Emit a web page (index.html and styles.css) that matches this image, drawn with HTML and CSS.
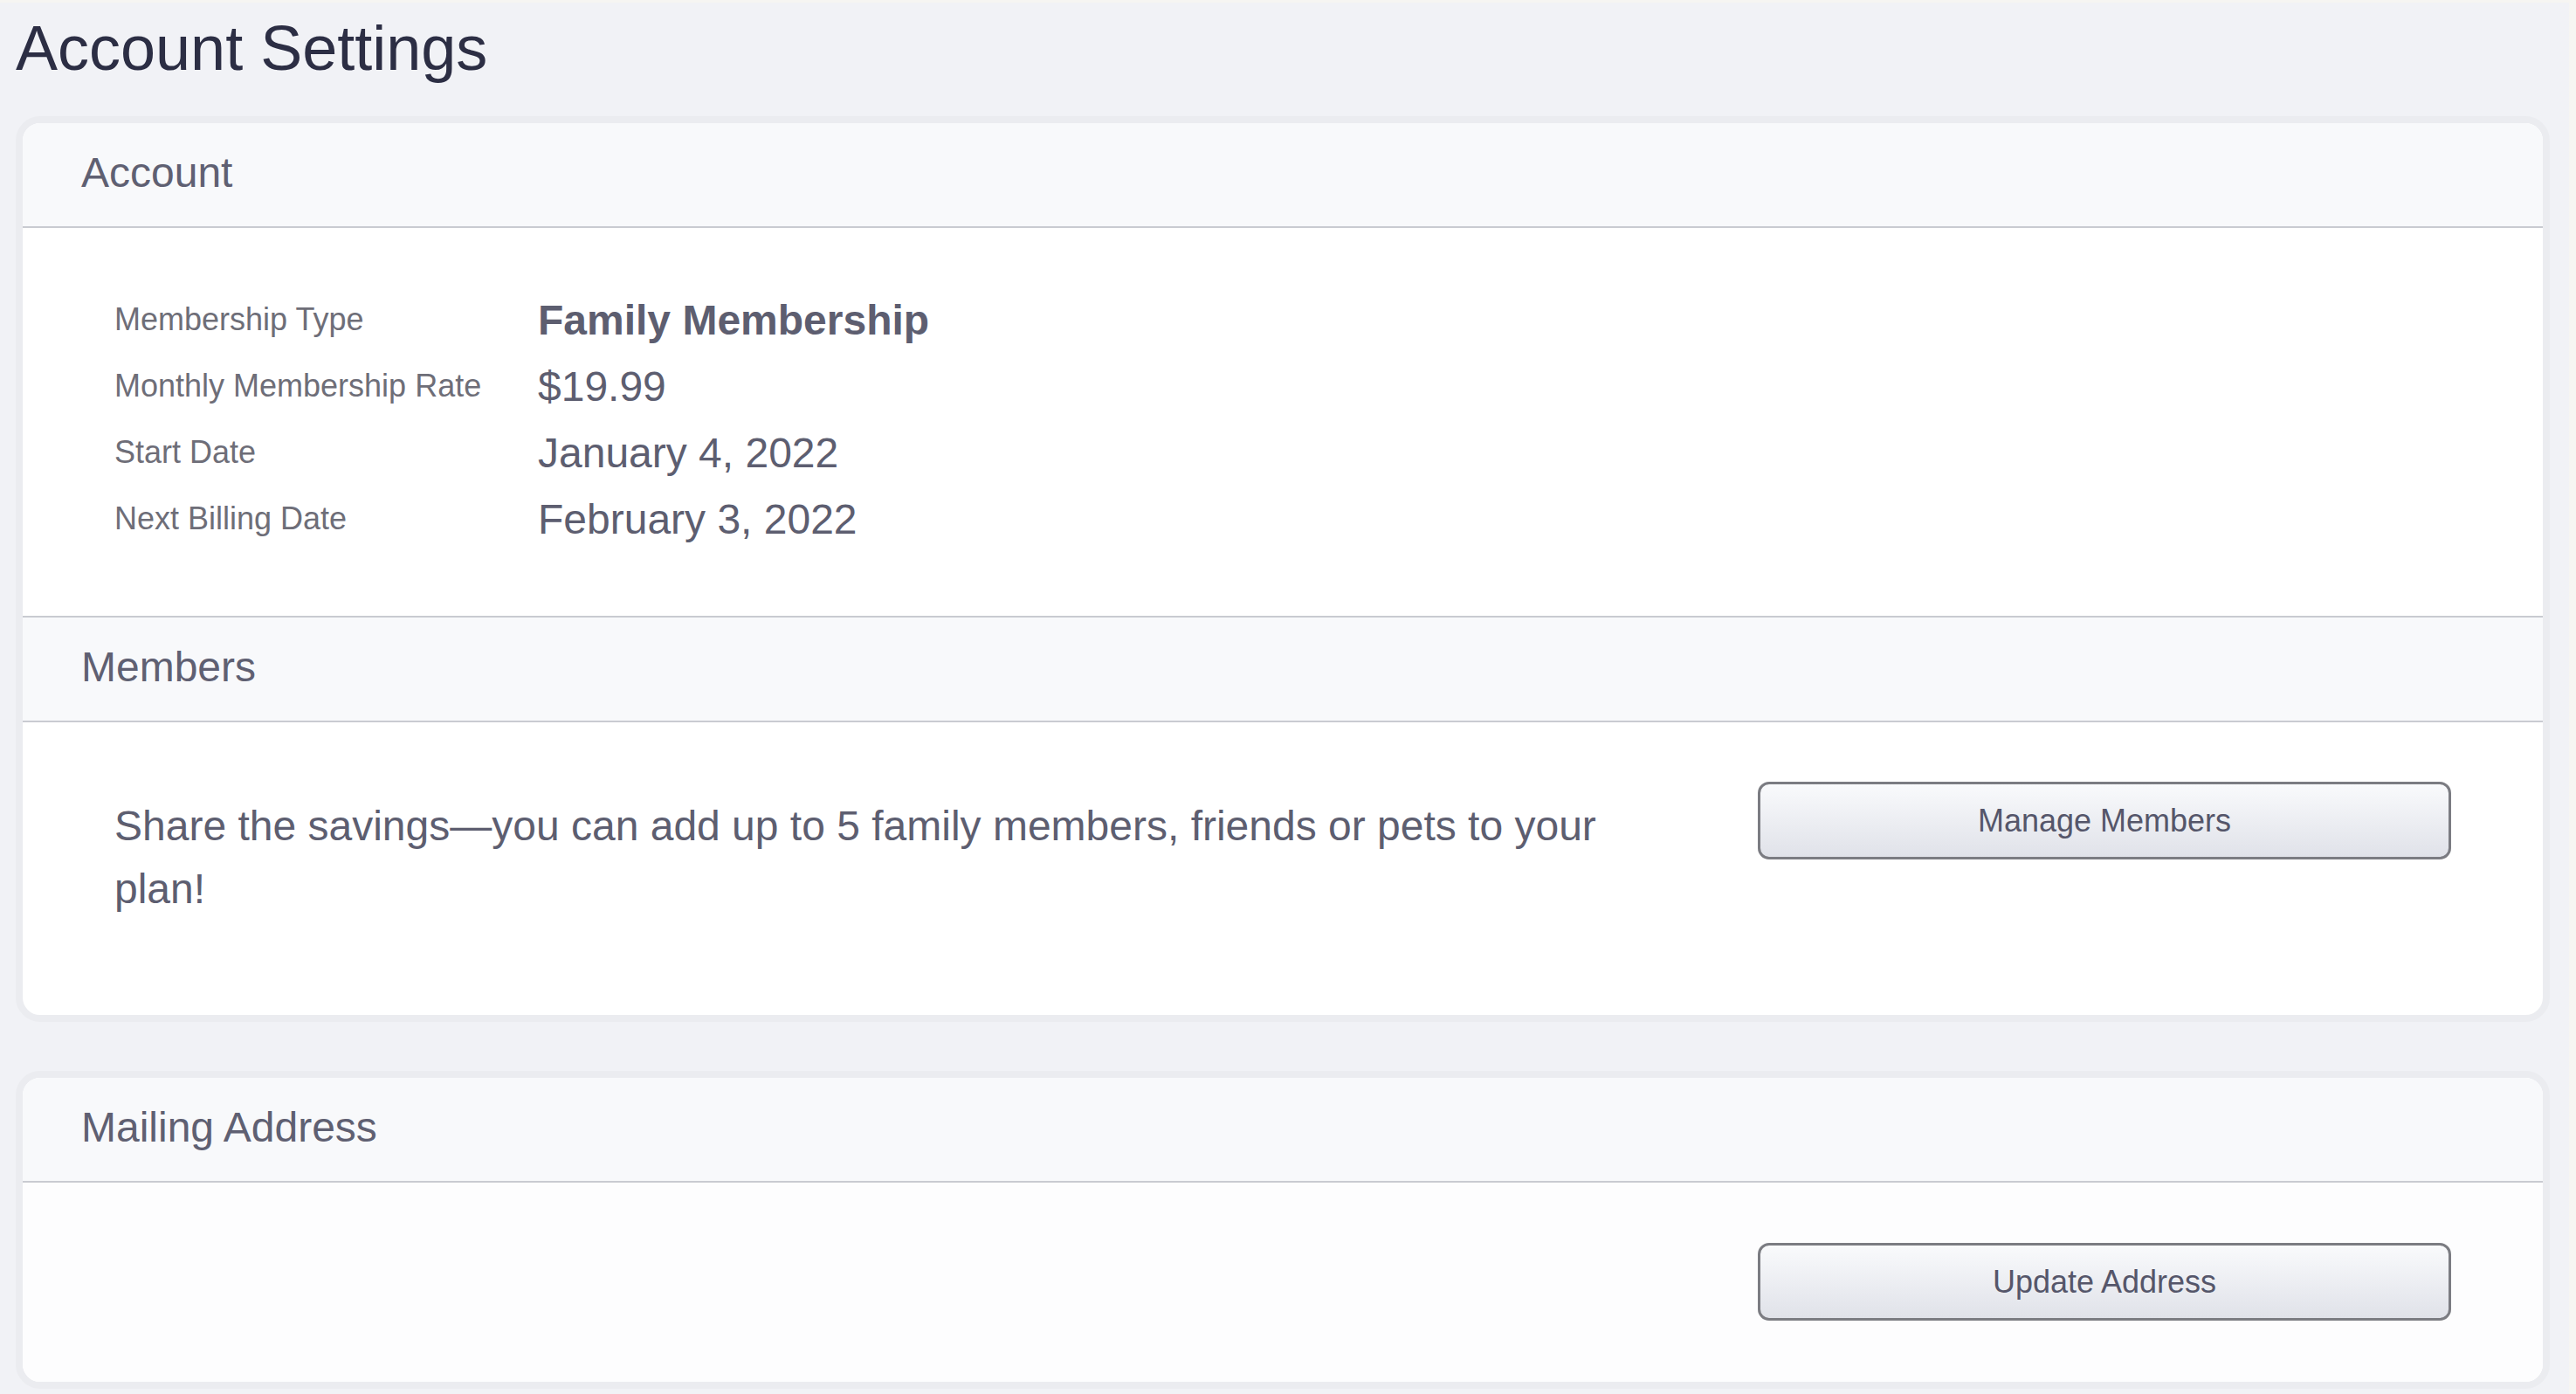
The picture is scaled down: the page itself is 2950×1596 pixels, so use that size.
FILE: index.html
```html
<!DOCTYPE html>
<html lang="en">
<head>
<meta charset="utf-8">
<title>Account Settings</title>
<link rel="stylesheet" href="styles.css">
</head>
<body>
<div class="page">
  <h1 class="page-title">Account Settings</h1>

  <section class="card">
    <div class="section">
      <h2 class="section-header">Account</h2>
      <div class="section-body details">
        <div class="detail-label">Membership Type</div>
        <div class="detail-value strong">Family Membership</div>
        <div class="detail-label">Monthly Membership Rate</div>
        <div class="detail-value">$19.99</div>
        <div class="detail-label">Start Date</div>
        <div class="detail-value">January 4, 2022</div>
        <div class="detail-label">Next Billing Date</div>
        <div class="detail-value">February 3, 2022</div>
      </div>
    </div>
    <div class="section">
      <h2 class="section-header">Members</h2>
      <div class="section-body split members-body">
        <p class="blurb">Share the savings—you can add up to 5 family members, friends or pets to your plan!</p>
        <button class="btn" type="button">Manage Members</button>
      </div>
    </div>
  </section>

  <section class="card">
    <div class="section">
      <h2 class="section-header">Mailing Address</h2>
      <div class="section-body split address-body">
        <div class="address"></div>
        <button class="btn" type="button">Update Address</button>
      </div>
    </div>
  </section>
</div>
</body>
</html>
```

FILE: styles.css
```css
html, body {
  margin: 0;
  padding: 0;
  background: #f6f5f2;
  font-family: "Liberation Sans", Arial, Helvetica, sans-serif;
}

.page {
  margin: 3px 8px 0 0;
  padding: 0 22px 3px 18px;
  background: #f1f2f6;
  min-height: 1593px;
  box-sizing: border-box;
}

.page-title {
  margin: 0;
  padding-top: 12px;
  font-size: 72px;
  font-weight: 400;
  line-height: 80px;
  color: #2c2e44;
}

.card {
  margin-top: 38px;
  border: 8px solid #ebecf0;
  border-radius: 28px;
  overflow: hidden;
  background: #ffffff;
}

.card + .card {
  margin-top: 56px;
}

.section + .section {
  border-top: 2px solid #c9cbd1;
}

.section-header {
  margin: 0;
  padding: 30px 67px 35px;
  height: 53px;
  font-size: 48px;
  line-height: 53px;
  font-weight: 400;
  color: #5f6072;
  background: #f8f9fb;
  border-bottom: 2px solid #c9cbd1;
}

.section-body {
  padding: 0 105px;
}

.details {
  display: grid;
  grid-template-columns: 485px auto;
  grid-auto-rows: 76px;
  align-items: center;
  padding-top: 67px;
  padding-bottom: 73px;
}

.detail-label {
  font-size: 36px;
  color: #6e6e78;
}

.detail-value {
  font-size: 48px;
  color: #5d5e70;
}

.detail-value.strong {
  font-weight: 700;
}

.split {
  display: grid;
  grid-template-columns: 1fr 794px;
  column-gap: 140px;
  align-items: start;
}

.members-body {
  padding-top: 68px;
  padding-bottom: 108px;
}

.address-body {
  padding-top: 69px;
  padding-bottom: 70px;
  background: #fdfdfe;
}

.blurb {
  margin: 15px 0 0;
  font-size: 48px;
  line-height: 72px;
  color: #5d5e70;
}

.btn {
  height: 89px;
  width: 794px;
  border: 3px solid #7b7c82;
  border-radius: 13px;
  background: linear-gradient(#f9fafc, #e0e2e9);
  font-family: "Liberation Sans", Arial, Helvetica, sans-serif;
  font-size: 36px;
  color: #55566a;
  padding: 0;
  cursor: pointer;
}
```
